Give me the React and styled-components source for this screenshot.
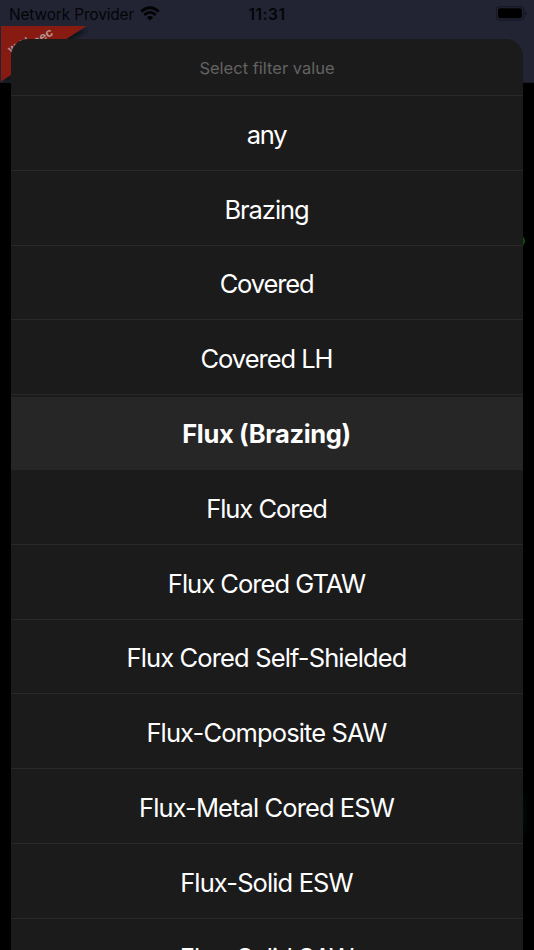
import styled, { createGlobalStyle } from "styled-components";

const options = [
  { label: "any", tracking: "-1.3px" },
  { label: "Brazing", tracking: "-1.05px" },
  { label: "Covered", tracking: "-1.15px" },
  { label: "Covered LH", tracking: "-1.03px" },
  { label: "Flux (Brazing)", tracking: "-0.36px", selected: true },
  { label: "Flux Cored", tracking: "-1.03px" },
  { label: "Flux Cored GTAW", tracking: "-0.98px" },
  { label: "Flux Cored Self-Shielded", tracking: "-0.87px" },
  { label: "Flux-Composite SAW", tracking: "-0.88px" },
  { label: "Flux-Metal Cored ESW", tracking: "-0.9px" },
  { label: "Flux-Solid ESW", tracking: "-0.88px" },
  { label: "Flux-Solid SAW", tracking: "-0.88px" },
];

const App = () => {
  return (
    <Screen>
      <NavBar>
        <StatusBar>
          <Carrier>
            <span>Network Provider</span>
            <Wifi />
          </Carrier>
          <Clock>11:31</Clock>
          <Battery />
        </StatusBar>
        <Ribbon />
      </NavBar>
      <GreenDot />
      <TealGlow />
      <Sheet>
        <SheetTitle>Select filter value</SheetTitle>
        {options.map(({ label, tracking, selected }) => (
          <Option key={label} $tracking={tracking} $selected={selected}>
            {label}
          </Option>
        ))}
      </Sheet>
      <GlobalStyle />
    </Screen>
  );
};

const Wifi = () => (
  <WifiSvg width="20" height="15" viewBox="0 0 20 15">
    <g fill="none" stroke="#020203" strokeWidth="2.7">
      <path d="M1.2 5.6Q10-2.5 18.8 5.6" />
      <path d="M4.2 8.9Q10 3.9 15.8 8.9" />
    </g>
    <path d="M6.9 11.4Q10 8.8 13.1 11.4L10 14.5Z" fill="#020203" />
  </WifiSvg>
);

const Battery = () => (
  <svg width="32" height="16" viewBox="0 0 32 16">
    <rect x="0.2" y="0.6" width="27.6" height="13.6" rx="3.8" fill="none" stroke="#151724" strokeWidth="1.3" />
    <rect x="2" y="2.2" width="24" height="10" rx="2.2" fill="#000" />
    <path d="M29 5.2Q32 7.4 29 9.6Z" fill="#151724" />
  </svg>
);

const Ribbon = () => (
  <RibbonSvg width="100" height="57" viewBox="0 0 100 57">
    <defs>
      <filter id="ribbonShadow" x="-20%" y="-20%" width="150%" height="150%">
        <feGaussianBlur stdDeviation="1.5" />
      </filter>
    </defs>
    <path d="M4 4H88L4 59Z" fill="#10121d" filter="url(#ribbonShadow)" />
    <path d="M1 0H86.5L1 55.5Z" fill="#881b11" />
    <g fill="#b39491" fontWeight="700" fontFamily="Inter, sans-serif">
      <text x="11" y="28" transform="rotate(-33 11 28)" fontSize="9">
        Weld
      </text>
      <text x="29" y="24.5" transform="rotate(-33 29 24.5)" fontSize="12">
        Spec
      </text>
    </g>
  </RibbonSvg>
);

const GlobalStyle = createGlobalStyle`
  body {
    margin: 0;
    background: #000;
    overflow: hidden;
  }
`;

const Screen = styled.div`
  position: relative;
  width: 534px;
  height: 950px;
  overflow: hidden;
  background: #000;
  font-family: Inter, sans-serif;
`;

const NavBar = styled.div`
  height: 83px;
  box-sizing: border-box;
  background: #222434;
  border-bottom: 1px solid #1b1c28;
`;

const StatusBar = styled.div`
  display: grid;
  grid-template-columns: 1fr auto 1fr;
  align-items: center;
  height: 26px;
  padding: 2px 6px 0 6px;
  box-sizing: border-box;
  color: #050508;

  > svg {
    justify-self: end;
  }
`;

const Carrier = styled.div`
  display: flex;
  align-items: center;
  gap: 6px;
  padding-left: 3px;
  font-size: 15.5px;
  letter-spacing: -0.18px;
  white-space: nowrap;
`;

const WifiSvg = styled.svg`
  margin-bottom: 2px;
`;

const Clock = styled.div`
  font-size: 15.5px;
  font-weight: 600;
  letter-spacing: 0.5px;
`;

const RibbonSvg = styled.svg`
  display: block;
`;

/* page content peeking out from behind the sheet */
const GreenDot = styled.div`
  position: absolute;
  top: 235px;
  left: 513px;
  width: 12px;
  height: 12px;
  border-radius: 50%;
  background: #075207;
`;

const TealGlow = styled.div`
  position: absolute;
  top: 790px;
  left: 510px;
  width: 16px;
  height: 50px;
  border-radius: 50%;
  background: #020c0c;
  filter: blur(3px);
`;

const Sheet = styled.div`
  position: absolute;
  top: 39px;
  left: 11px;
  width: 512px;
  height: 930px;
  overflow: hidden;
  border-radius: 17px 17px 0 0;
  background: #1b1b1b;
`;

const SheetTitle = styled.div`
  height: 56px;
  padding-top: 2px;
  box-sizing: border-box;
  display: flex;
  align-items: center;
  justify-content: center;
  color: #636363;
  font-size: 16.5px;
`;

const Option = styled.div`
  display: flex;
  align-items: center;
  justify-content: center;
  height: 74.8px;
  padding: 3px 1px 0 0;
  box-sizing: border-box;
  border-top: 1px solid #292929;
  background: ${({ $selected }) =>
    $selected
      ? "linear-gradient(#1b1b1b 3px, #262626 3px) border-box"
      : "transparent"};
  color: #fff;
  font-size: 25.5px;
  font-weight: ${({ $selected }) => ($selected ? 700 : 400)};
  letter-spacing: ${({ $tracking }) => $tracking};
  white-space: nowrap;

  /* the highlight runs into the divider below it */
  ${({ $selected }) => $selected && "& + div { border-top-color: #262626; }"}
`;

export default App;
